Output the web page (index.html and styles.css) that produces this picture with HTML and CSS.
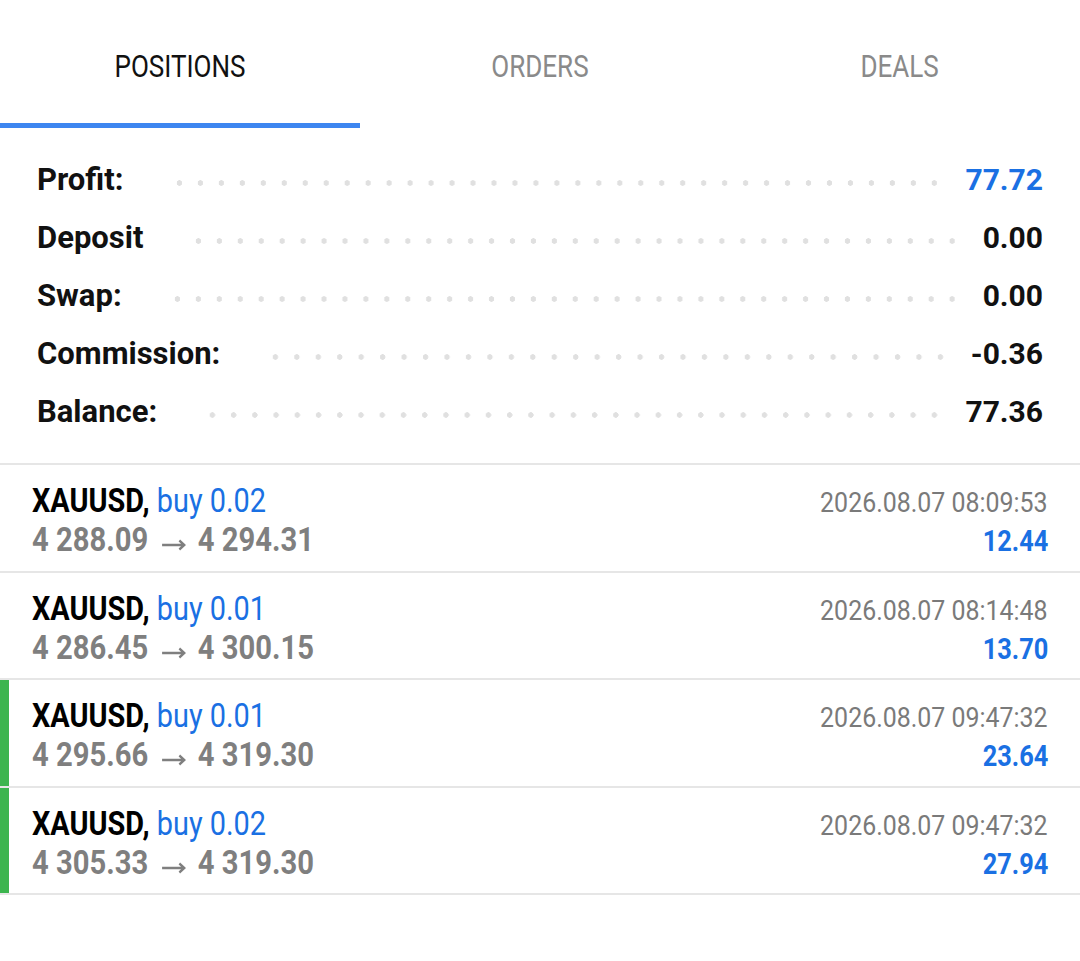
FILE: index.html
```html
<!DOCTYPE html>
<html>
<head>
<meta charset="utf-8">
<link rel="stylesheet" href="styles.css">
</head>
<body>
<div class="tabs">
  <div class="tab active"><span class="tab-label">POSITIONS</span></div>
  <div class="tab"><span class="tab-label">ORDERS</span></div>
  <div class="tab"><span class="tab-label">DEALS</span></div>
</div>

<div class="summary">
  <div class="srow"><span class="slabel">Profit:</span><span class="dots"></span><span class="svalue blue">77.72</span></div>
  <div class="srow"><span class="slabel">Deposit</span><span class="dots"></span><span class="svalue">0.00</span></div>
  <div class="srow"><span class="slabel">Swap:</span><span class="dots"></span><span class="svalue">0.00</span></div>
  <div class="srow"><span class="slabel">Commission:</span><span class="dots"></span><span class="svalue">-0.36</span></div>
  <div class="srow"><span class="slabel">Balance:</span><span class="dots"></span><span class="svalue">77.36</span></div>
</div>

<div class="positions">
  <div class="pos">
    <div class="title"><b>XAUUSD,</b> <span class="blue">buy 0.02</span></div>
    <div class="date">2026.08.07 08:09:53</div>
    <div class="prices">4 288.09<svg class="arrow" viewBox="0 0 27 12"><path d="M0 6H25M19.5 1.5L25 6L19.5 10.5"/></svg>4 294.31</div>
    <div class="profit">12.44</div>
  </div>
  <div class="pos">
    <div class="title"><b>XAUUSD,</b> <span class="blue">buy 0.01</span></div>
    <div class="date">2026.08.07 08:14:48</div>
    <div class="prices">4 286.45<svg class="arrow" viewBox="0 0 27 12"><path d="M0 6H25M19.5 1.5L25 6L19.5 10.5"/></svg>4 300.15</div>
    <div class="profit">13.70</div>
  </div>
  <div class="pos open">
    <div class="title"><b>XAUUSD,</b> <span class="blue">buy 0.01</span></div>
    <div class="date">2026.08.07 09:47:32</div>
    <div class="prices">4 295.66<svg class="arrow" viewBox="0 0 27 12"><path d="M0 6H25M19.5 1.5L25 6L19.5 10.5"/></svg>4 319.30</div>
    <div class="profit">23.64</div>
  </div>
  <div class="pos open">
    <div class="title"><b>XAUUSD,</b> <span class="blue">buy 0.02</span></div>
    <div class="date">2026.08.07 09:47:32</div>
    <div class="prices">4 305.33<svg class="arrow" viewBox="0 0 27 12"><path d="M0 6H25M19.5 1.5L25 6L19.5 10.5"/></svg>4 319.30</div>
    <div class="profit">27.94</div>
  </div>
</div>
</body>
</html>
```

FILE: styles.css
```css
* { box-sizing: border-box; }
html, body { margin: 0; padding: 0; background: #fff; }
body {
  font-family: Roboto, "Liberation Sans", sans-serif;
  color: #000;
  width: 1080px;
}

.blue { color: #1a70e3; }

/* Tabs */
.tabs {
  display: grid;
  grid-template-columns: 360px 360px 360px;
}
.tab {
  height: 128px;
  padding-top: 10px;
  border-bottom: 5px solid transparent;
  display: flex;
  align-items: center;
  justify-content: center;
  font-size: 31px;
  color: #8a8a8a;
}
.tab.active {
  color: #111;
  border-bottom-color: #3d86f0;
}
.tab-label {
  display: inline-block;
  transform: scaleX(0.84);
}

/* Summary */
.summary {
  padding: 22px 37px 23px 37px;
}
.srow {
  height: 58px;
  display: flex;
  align-items: center;
}
.slabel {
  font-size: 31px;
  font-weight: 700;
  color: #111;
}
.dots {
  flex: 1;
  height: 6px;
  margin: 7px 20px 0 45px;
  background-image: radial-gradient(circle, #e0e0e0 2.5px, transparent 3px);
  background-size: 20.8px 6px;
  background-repeat: space no-repeat;
}
.svalue {
  font-size: 30px;
  font-weight: 700;
  color: #111;
}
.svalue.blue { color: #1a70e3; }

/* Positions */
.positions {
  border-top: 2px solid #e6e6e6;
}
.pos {
  display: grid;
  grid-template-columns: 1fr auto;
  grid-template-rows: 39px 39px;
  align-items: baseline;
  align-content: start;
  height: 107.5px;
  padding: 16px 32px 0 32px;
  border-bottom: 2px solid #e6e6e6;
  line-height: 39px;
  overflow: hidden;
}
.pos.open {
  box-shadow: inset 9px 0 0 #3cb54e;
}
.title, .prices {
  font-size: 33px;
  transform-origin: left center;
  white-space: nowrap;
}
.title { transform: scaleX(0.875); }
.title b { font-weight: 700; color: #000; }
.prices {
  font-weight: 700;
  color: #7f7f7f;
  transform: scaleX(0.885);
}
.arrow {
  width: 27px;
  height: 12px;
  margin: 0 13px 0 16px;
  vertical-align: 0;
  fill: none;
  stroke: #7f7f7f;
  stroke-width: 2.6;
}
.date, .profit {
  justify-self: end;
  transform-origin: right center;
  white-space: nowrap;
}
.date {
  font-size: 28px;
  color: #7a7a7a;
  transform: scaleX(0.89);
}
.profit {
  font-size: 29.5px;
  font-weight: 700;
  color: #1a70e3;
  transform: scaleX(0.86);
}
```
